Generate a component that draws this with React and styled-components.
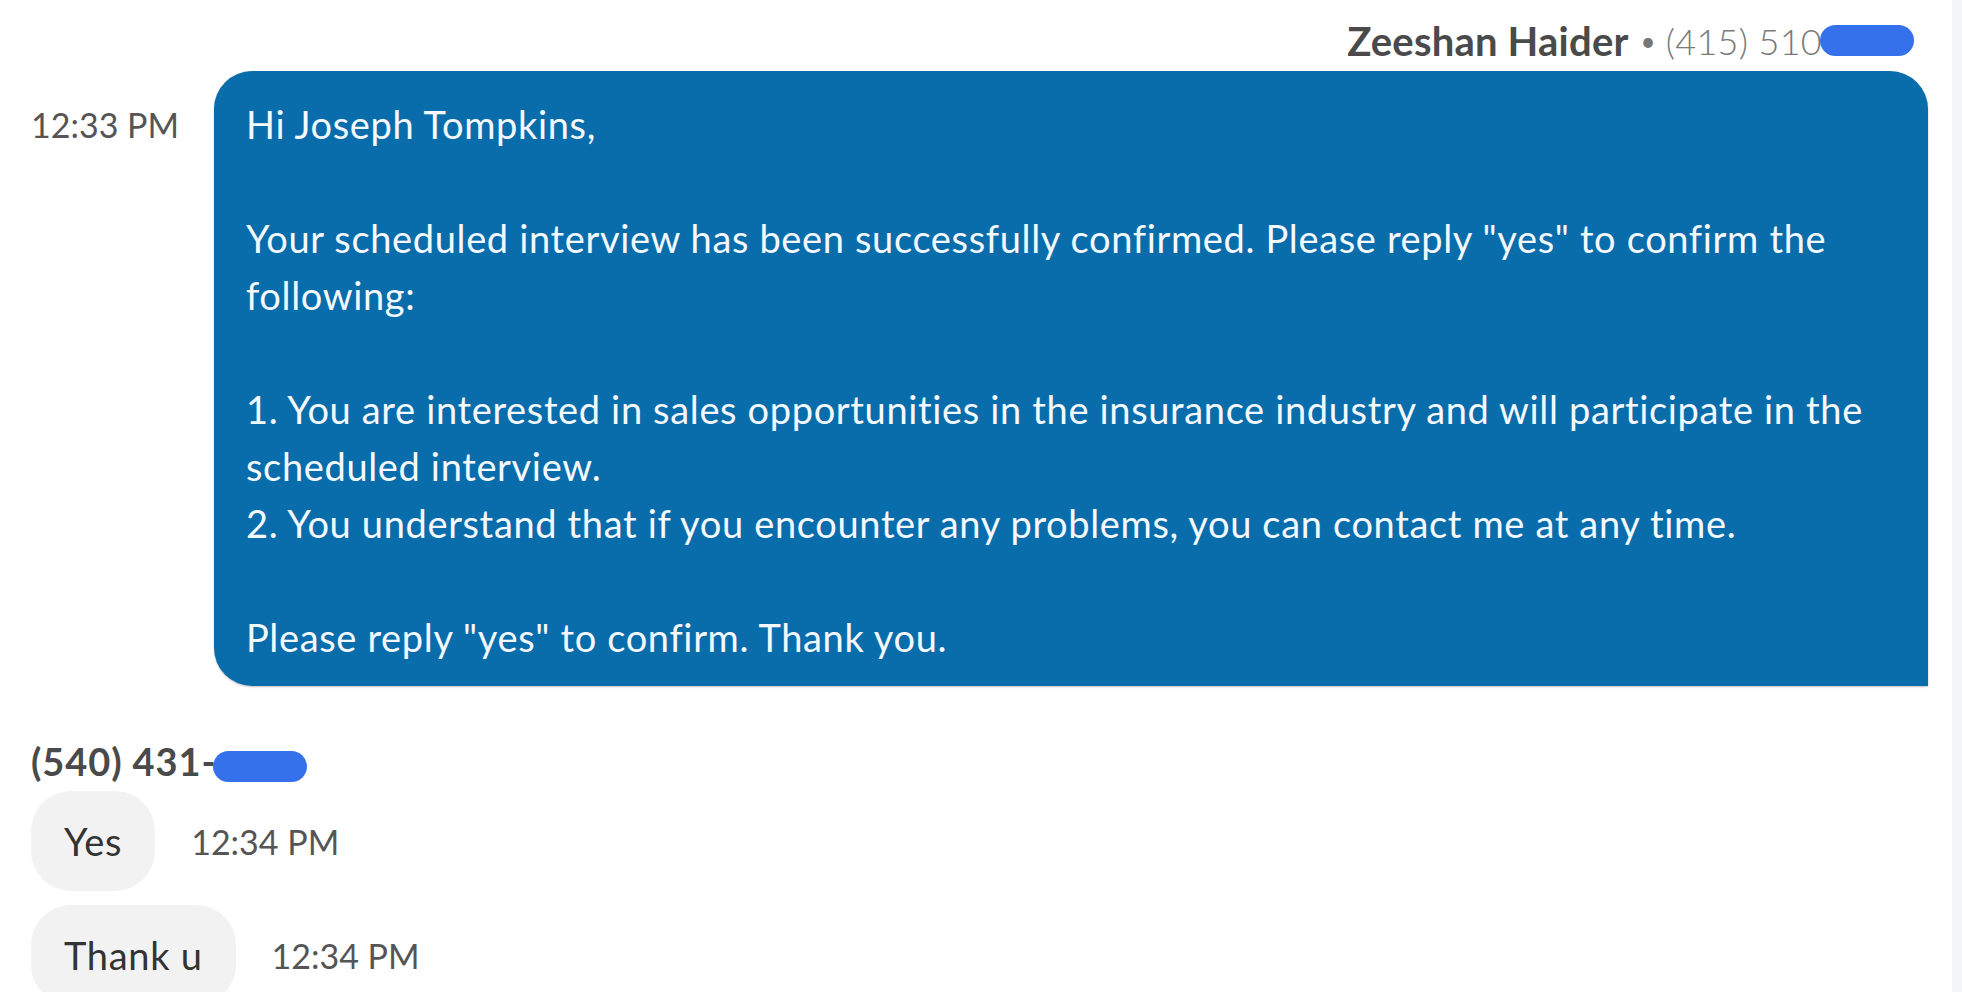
import React from 'react'
import styled, { createGlobalStyle } from 'styled-components'

const GlobalStyle = createGlobalStyle`
  html, body {
    margin: 0;
    padding: 0;
    background: #ffffff;
    font-family: Lato, "Open Sans", sans-serif;
  }
`

const Page = styled.div`
  display: flex;
  width: 1962px;
  height: 992px;
  overflow: hidden;
`

const Thread = styled.div`
  flex: 1;
  display: flex;
  flex-direction: column;

  & > * {
    flex-shrink: 0;
  }
`

const Scrollbar = styled.div`
  width: 10px;
  background: #f4f5f7;
`

const SenderRow = styled.div`
  box-sizing: border-box;
  display: flex;
  justify-content: flex-end;
  align-items: center;
  height: 71px;
  padding: 10px 38px 0 0;
  color: #4a4a4a;
  white-space: nowrap;
`

const SenderName = styled.span`
  font-size: 40px;
  font-weight: 700;
  letter-spacing: 0.2px;
`

const Dot = styled.span`
  font-size: 26px;
  color: #777;
  margin: 0 10px 0 12px;
`

const SenderPhone = styled.span`
  font-size: 36px;
  font-weight: 300;
  color: #7a7a7a;
  letter-spacing: 0.3px;
`

const Redact = styled.span`
  display: inline-block;
  width: ${p => p.w}px;
  height: ${p => p.h}px;
  background: #3571ea;
  border-radius: ${p => p.h / 2}px;
  margin-left: ${p => p.ml || 0}px;
  vertical-align: middle;
`

const OutRow = styled.div`
  display: flex;
  align-items: flex-start;
  padding: 0 24px 0 31px;
`

const Stamp = styled.span`
  font-size: 34px;
  color: #555;
  line-height: 57px;
  white-space: nowrap;
  width: ${p => p.w || 'auto'};
  padding-top: ${p => p.pt || 0}px;
  flex-shrink: 0;
`

const OutBubble = styled.div`
  flex: 1;
  background: #0a6dab;
  color: #f4f9ff;
  border-radius: 38px 38px 0 38px;
  padding: 25px 32px 20px;
  font-size: 38px;
  line-height: 57px;
  letter-spacing: 0.65px;
  white-space: pre;
  box-shadow: 0 1px 2px rgba(0, 0, 0, 0.25);
`

const Contact = styled.div`
  margin: 52px 0 7px 31px;
  font-size: 38px;
  font-weight: 700;
  color: #4a4a4a;
  line-height: 46px;
  letter-spacing: 0.9px;
  white-space: nowrap;
`

const InRow = styled.div`
  display: flex;
  align-items: center;
  gap: 36px;
  padding-left: 31px;
  margin-bottom: 14px;
`

const InBubble = styled.div`
  background: #f2f2f2;
  color: #333;
  font-size: 38px;
  letter-spacing: 0.7px;
  line-height: 40px;
  padding: 30px 33px;
  border-radius: 40px;
  white-space: nowrap;
`

const message = `Hi Joseph Tompkins,

Your scheduled interview has been successfully confirmed. Please reply "yes" to confirm the
following:

1. You are interested in sales opportunities in the insurance industry and will participate in the
scheduled interview.
2. You understand that if you encounter any problems, you can contact me at any time.

Please reply "yes" to confirm. Thank you.`

const replies = [
  { text: 'Yes', time: '12:34 PM' },
  { text: 'Thank u', time: '12:34 PM' },
]

export default function App() {
  return (
    <>
      <GlobalStyle />
      <Page>
        <Thread>
          <SenderRow>
            <SenderName>Zeeshan Haider</SenderName>
            <Dot>•</Dot>
            <SenderPhone>(415) 510</SenderPhone>
            <Redact w={94} h={31} ml={-2} />
          </SenderRow>
          <OutRow>
            <Stamp w="183px" pt={25}>12:33 PM</Stamp>
            <OutBubble>{message}</OutBubble>
          </OutRow>
          <Contact>
            (540) 431-<Redact w={94} h={31} ml={-4} />
          </Contact>
          {replies.map((r, i) => (
            <InRow key={i}>
              <InBubble>{r.text}</InBubble>
              <Stamp>{r.time}</Stamp>
            </InRow>
          ))}
        </Thread>
        <Scrollbar />
      </Page>
    </>
  )
}
